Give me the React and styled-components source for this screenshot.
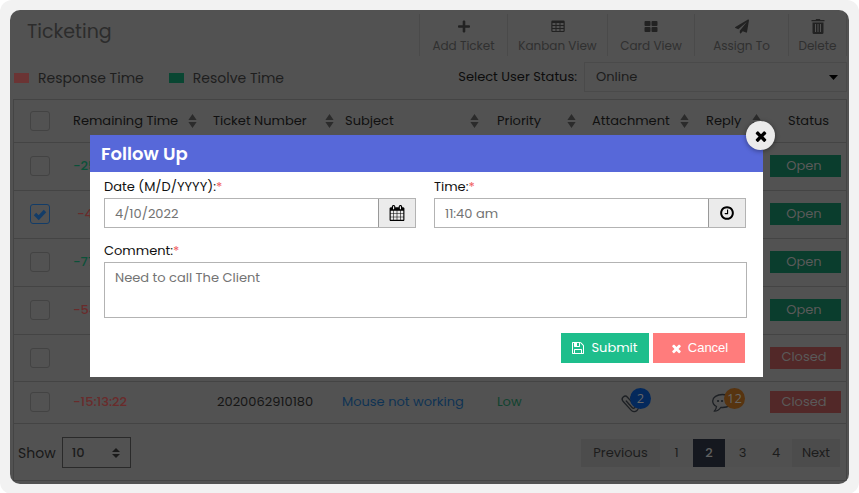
import React from "react";
import styled, { createGlobalStyle } from "styled-components";
import { FaPlus, FaPaperPlane } from "react-icons/fa";

const color = {
  frame: "#f2f2f2",
  panel: "#525252",
  line: "#444444",
  soft: "#4a4a4a",
  text: "#151515",
  muted: "#303030",
  green: "#0a3d2d",
  greenText: "#0b5139",
  red: "#522828",
  redText: "#6a2b2b",
  blue: "#0f3354",
};

const Global = createGlobalStyle`
  *, *::before, *::after { box-sizing: border-box; }
  body { margin: 0; background: #fff; }
  body, button, input, select, textarea {
    font-family: Poppins, Inter, sans-serif;
    font-size: 13px;
    line-height: 20px;
  }
  button, input, select, textarea { margin: 0; border-radius: 0; }
  button { cursor: pointer; }
`;

const Frame = styled.div`
  min-height: 100vh;
  display: flex;
  padding: 10px;
  background: ${color.frame};
  border-radius: 12px;
`;

const Panel = styled.div`
  position: relative;
  flex: 1;
  min-width: 0;
  padding: 4px 2px 3px 3px;
  background: ${color.panel};
  border-radius: 10px;
  overflow: hidden;
  color: ${color.text};
`;

const TopBar = styled.header`
  display: flex;
  justify-content: space-between;
  padding-left: 14px;
`;

const Title = styled.h1`
  margin: 5px 0 0;
  font-size: 19px;
  line-height: 26px;
  font-weight: 400;
  color: #2c2c2c;
`;

const Tools = styled.nav`
  display: flex;
  border-right: 1px solid ${color.soft};
`;

const Tool = styled.button`
  width: ${(p) => p.$width}px;
  height: 42px;
  padding: 5px 0 0;
  display: flex;
  flex-direction: column;
  align-items: center;
  gap: 3px;
  border: 0;
  border-left: 1px solid ${color.soft};
  background: none;
  color: ${color.muted};
  font-size: 12px;
  line-height: 18px;
  white-space: nowrap;
  svg { height: 15px; color: #222; }
`;

const Filters = styled.div`
  display: flex;
  align-items: center;
  padding: 6px 0 7px;
`;

const Legend = styled.div`
  display: flex;
  flex: 1;
  gap: 25px;
  padding: 2px 0 0 1px;
  font-size: 14px;
`;

const LegendItem = styled.span`
  display: flex;
  align-items: center;
  gap: 9px;
  color: #1e1e1e;
  &::before {
    content: "";
    width: 15px;
    height: 10px;
    background: ${(p) => p.$tone};
  }
`;

const StatusLabel = styled.label`
  margin-right: 7px;
  color: #0c0c0c;
`;

const SelectBox = styled.span`
  display: grid;
  align-items: center;
  width: ${(p) => p.$width}px;
  height: ${(p) => p.$height}px;
  > * { grid-area: 1 / 1; }
  svg {
    justify-self: end;
    margin-right: ${(p) => p.$inset}px;
    pointer-events: none;
  }
`;

const Select = styled.select`
  width: 100%;
  height: 100%;
  padding: 0 ${(p) => (p.$strong ? 9 : 11)}px;
  appearance: none;
  border: ${(p) => (p.$strong ? "1px solid #2a2a2a" : `1px solid ${color.soft}`)};
  background: none;
  color: #1c1c1c;
  font-weight: ${(p) => (p.$strong ? 500 : 400)};
`;

const Card = styled.section`
  border: 1px solid ${color.line};
`;

const Table = styled.table`
  width: 100%;
  table-layout: fixed;
  border-collapse: collapse;
`;

const Row = styled.tr`
  height: ${(p) => p.$height}px;
  border-bottom: 1px solid ${color.line};
`;

const HeadCell = styled.th`
  padding: 0;
  font-weight: 400;
  text-align: left;
  white-space: nowrap;
  color: #101010;
`;

const HeadInner = styled.div`
  display: flex;
  align-items: center;
  justify-content: space-between;
  padding: 0 ${(p) => p.$pad || 0}px 0 ${(p) => p.$indent || 0}px;
  svg { flex: none; }
`;

const Cell = styled.td`
  padding: 0 0 0 ${(p) => p.$indent || 0}px;
  white-space: nowrap;
  vertical-align: middle;
`;

const Check = styled.input`
  display: block;
  width: 20px;
  height: 20px;
  margin: 0 0 0 16px;
  appearance: none;
  border: 1px solid #434343;
  border-radius: 3px;
  &:checked {
    border-color: #123c68;
    background: center / 14px no-repeat
      url("data:image/svg+xml,%3Csvg xmlns='http://www.w3.org/2000/svg' viewBox='0 0 14 14'%3E%3Cpath d='M2 7l3.7 3.7L12 4' fill='none' stroke='%23123c68' stroke-width='3.4'/%3E%3C/svg%3E");
  }
`;

const Remaining = styled.span`
  font-weight: 500;
  color: ${(p) => (p.$late ? color.redText : color.greenText)};
`;

const Subject = styled.a`
  color: ${color.blue};
  text-decoration: none;
`;

const Priority = styled.span`
  color: #10432f;
`;

const Status = styled.button`
  display: block;
  width: 71px;
  height: 22px;
  padding: 0 3px 1px 0;
  border: 0;
  background: ${(p) => (p.$closed ? color.red : color.green)};
  color: #5a5a5a;
`;

const IconCount = styled.span`
  position: relative;
  display: block;
  width: 40px;
  height: 30px;
  margin-left: ${(p) => p.$indent}px;
`;

const Badge = styled.span`
  position: absolute;
  top: 1px;
  right: ${(p) => p.$right}px;
  width: 21px;
  height: 21px;
  border-radius: 50%;
  background: ${(p) => p.$tone};
  color: #666;
  font-family: "Open Sans", sans-serif;
  text-align: center;
  line-height: 21px;
`;

const Footer = styled.footer`
  display: flex;
  align-items: center;
  height: 56px;
  padding: 2px 6px 0 4px;
`;

const ShowLabel = styled.label`
  margin-right: 6px;
  font-size: 14px;
  color: #181818;
`;

const Pager = styled.nav`
  display: flex;
  margin-left: auto;
`;

const PageButton = styled.button`
  width: ${(p) => p.$width}px;
  height: 28px;
  padding: 0;
  border: 0;
  background: ${(p) => (p.$active ? "#15181f" : p.$edge ? "#4c4c4c" : "#505050")};
  color: ${(p) => (p.$active ? "#606060" : "#1c1c1c")};
  font-weight: ${(p) => (p.$active ? 500 : 400)};
`;

const Backdrop = styled.div`
  position: absolute;
  inset: 0;
  padding: 125px 86px 0 80px;
`;

const Dialog = styled.form`
  position: relative;
  background: #fff;
  color: #111;
`;

const DialogTitle = styled.h2`
  margin: 0;
  padding: 0 11px;
  background: #5768d9;
  color: #fff;
  font-size: 18px;
  line-height: 37px;
  font-weight: 600;
`;

const CloseButton = styled.button`
  position: absolute;
  top: -14px;
  right: -12px;
  width: 29px;
  height: 29px;
  padding: 0;
  display: grid;
  place-items: center;
  border: 0;
  border-radius: 50%;
  background: #ebebeb;
  color: #000;
  box-shadow: 0 1px 5px rgba(0, 0, 0, 0.4);
`;

const DialogBody = styled.div`
  padding: 5px 16px 14px 14px;
`;

const Fields = styled.div`
  display: grid;
  grid-template-columns: 1fr 1fr;
  gap: 18px;
  margin-bottom: 13px;
  padding-right: 1px;
`;

const Label = styled.label`
  display: block;
  margin-bottom: 1px;
`;

const Star = styled.span`
  color: #f0605f;
`;

const InputGroup = styled.div`
  display: flex;
  height: 30px;
  border: 1px solid #b3b3b3;
`;

const Input = styled.input`
  flex: 1;
  min-width: 0;
  padding: 2px 10px 0;
  border: 0;
  background: none;
  color: #737373;
`;

const AddOn = styled.button`
  width: 37px;
  padding: 0;
  display: grid;
  place-items: center;
  border: 0;
  border-left: 1px solid #999;
  background: #ebebeb;
  color: #000;
`;

const Comment = styled.textarea`
  display: block;
  width: 100%;
  height: 56px;
  padding: 5px 10px;
  border: 1px solid #b3b3b3;
  resize: none;
  color: #737373;
`;

const Actions = styled.div`
  display: flex;
  justify-content: flex-end;
  gap: 4px;
  padding: 15px 2px 0 0;
`;

const Action = styled.button`
  display: flex;
  align-items: center;
  justify-content: center;
  gap: ${(p) => (p.$cancel ? 5 : 7)}px;
  width: ${(p) => (p.$cancel ? 92 : 88)}px;
  height: 30px;
  padding: 0;
  border: 0;
  background: ${(p) => (p.$cancel ? "#ff7c7c" : "#1ebe8c")};
  color: #fff;
  ${(p) => p.$cancel && 'font-family: "Liberation Sans", sans-serif;'}
`;

const SortIcon = () => (
  <svg width="9" height="14" viewBox="0 0 9 14" fill="#2b2b2b" aria-hidden="true">
    <path d="M4.5 0L8.6 6H.4zM4.5 14L.4 8h8.2z" />
  </svg>
);

const GridIcon = () => (
  <svg width="14" height="15" viewBox="0 0 14 15" aria-hidden="true">
    <path
      fill="currentColor"
      fillRule="evenodd"
      d="M1.5 1.500h11A1.200 1.200 0 0 1 13.700 2.700v9.100a1.200 1.200 0 0 1-1.200 1.200h-11A1.200 1.200 0 0 1 .3 11.800V2.700A1.200 1.200 0 0 1 1.500 1.500zM1.500 4v2h3V4zM5.500 4v2h3V4zM9.500 4v2h3V4zM1.500 7v2h3V7zM5.500 7v2h3V7zM9.500 7v2h3V7zM1.500 10v2h3v-2zM5.500 10v2h3v-2zM9.500 10v2h3v-2z"
    />
  </svg>
);

const TilesIcon = () => (
  <svg width="14" height="15" viewBox="0 0 14 15" fill="currentColor" aria-hidden="true">
    <rect x="0.5" y="2" width="6" height="5" rx="1" />
    <rect x="7.5" y="2" width="6" height="5" rx="1" />
    <rect x="0.5" y="8" width="6" height="5" rx="1" />
    <rect x="7.5" y="8" width="6" height="5" rx="1" />
  </svg>
);

const TrashIcon = () => (
  <svg width="14" height="15" viewBox="0 0 14 15" aria-hidden="true">
    <path
      fill="currentColor"
      fillRule="evenodd"
      d="M.5 1h4l.7-1h3.600l.7 1h4v1.300H.5zM1.500 3.500h11V13.500a1.500 1.500 0 0 1-1.500 1.500H3a1.500 1.500 0 0 1-1.500-1.500zM4 5v8h1V5zM6.500 5v8h1V5zM9 5v8h1V5z"
    />
  </svg>
);

const Glyph = ({ size, d, box = "0 0 1792 1792" }) => (
  <svg width={size} height={size} viewBox={box} fill="currentColor" aria-hidden="true">
    <path d={d} />
  </svg>
);

const crossPath =
  "M1490 1322q0 40-28 68l-136 136q-28 28-68 28t-68-28l-294-294-294 294q-28 28-68 28t-68-28l-136-136q-28-28-28-68t28-68l294-294-294-294q-28-28-28-68t28-68l136-136q28-28 68-28t68 28l294 294 294-294q28-28 68-28t68 28l136 136q28 28 28 68t-28 68l-294 294 294 294q28 28 28 68z";
const clockPath =
  "M1024 544v448q0 14-9 23t-23 9h-320q-14 0-23-9t-9-23v-64q0-14 9-23t23-9h224v-352q0-14 9-23t23-9h64q14 0 23 9t9 23zm416 352q0-148-73-273t-198-198-273-73-273 73-198 198-73 273 73 273 198 198 273 73 273-73 198-198 73-273zm224 0q0 209-103 385.5t-279.5 279.5-385.5 103-385.5-103-279.5-279.5-103-385.5 103-385.5 279.5-279.5 385.5-103 385.5 103 279.5 279.5 103 385.5z";
const calendarPath =
  "M192 1664h288v-288h-288v288zm352 0h320v-288h-320v288zm-352-352h288v-320h-288v320zm352 0h320v-320h-320v320zm-352-384h288v-288h-288v288zm736 736h320v-288h-320v288zm-384-736h320v-288h-320v288zm768 736h288v-288h-288v288zm-384-352h320v-320h-320v320zm-352-864v-288q0-13-9.5-22.5t-22.5-9.5h-64q-13 0-22.5 9.5t-9.5 22.5v288q0 13 9.5 22.5t22.5 9.5h64q13 0 22.5-9.5t9.5-22.5zm736 864h288v-320h-288v320zm-384-384h320v-288h-320v288zm384 0h288v-288h-288v288zm32-480v-288q0-13-9.5-22.5t-22.5-9.5h-64q-13 0-22.5 9.5t-9.5 22.5v288q0 13 9.5 22.5t22.5 9.5h64q13 0 22.5-9.5t9.5-22.5zm384-64v1280q0 52-38 90t-90 38h-1408q-52 0-90-38t-38-90v-1280q0-52 38-90t90-38h128v-96q0-66 47-113t113-47h64q66 0 113 47t47 113v96h384v-96q0-66 47-113t113-47h64q66 0 113 47t47 113v96h128q52 0 90 38t38 90z";
const savePath =
  "M384 1536h768v-384h-768v384zm896 0h128v-896q0-14-10-38.5t-20-34.5l-281-281q-10-10-34-20t-39-10v416q0 40-28 68t-68 28h-576q-40 0-68-28t-28-68v-416h-128v1280h128v-416q0-40 28-68t68-28h832q40 0 68 28t28 68v416zm-384-928v-320q0-13-9.5-22.5t-22.5-9.5h-192q-13 0-22.5 9.5t-9.5 22.5v320q0 13 9.5 22.5t22.5 9.5h192q13 0 22.5-9.5t9.5-22.5zm640 32v928q0 40-28 68t-68 28h-1344q-40 0-68-28t-28-68v-1344q0-40 28-68t68-28h928q40 0 88 20t76 48l280 280q28 28 48 76t20 88z";

const ClipIcon = () => (
  <svg width="40" height="30" viewBox="0 0 40 30" fill="none" stroke="#1d2024" strokeWidth="1.3" strokeLinecap="round" aria-hidden="true">
    <path
      transform="translate(10 16) rotate(-42)"
      d="M-1.5-4V5a1.75 1.75 0 0 0 3.5 0V-6a3 3 0 0 0-6 0V6a4.2 4.2 0 0 0 8.4 0V-4"
    />
  </svg>
);

const ChatIcon = () => (
  <svg width="40" height="30" viewBox="0 0 40 30" fill="none" stroke="#1d2024" strokeWidth="1.3" strokeLinejoin="round" aria-hidden="true">
    <path d="M11.5 7.500C6 7.500 1.700 10.300 1.700 14c0 2.400 1.500 4.300 3.800 5.500-.2 2-1 3.500-2.300 4.700 3 0 5-1.300 6.500-3.700h2c5.500 0 9.300-2.900 9.300-6.500S17 7.500 11.500 7.500z" />
    <path d="M7 14h.1M11 14h.1M15 14h.1" strokeWidth="2.2" strokeLinecap="round" />
  </svg>
);

const tools = [
  { label: "Add Ticket", width: 88, icon: <FaPlus size={12} /> },
  { label: "Kanban View", width: 100, icon: <GridIcon /> },
  { label: "Card View", width: 87, icon: <TilesIcon /> },
  { label: "Assign To", width: 94, icon: <FaPaperPlane size={14} /> },
  { label: "Delete", width: 58, icon: <TrashIcon /> },
];

const columns = [
  { label: "Remaining Time", width: 140, pad: 16 },
  { label: "Ticket Number", width: 129, pad: 8 },
  { label: "Subject", width: 155, pad: 18, indent: 3 },
  { label: "Priority", width: 95, pad: 16 },
  { label: "Attachment", width: 114, pad: 17 },
  { label: "Reply", width: 64, pad: 9 },
];

const rows = [
  { height: 48, remaining: "-25" },
  { height: 48, remaining: "-4", late: true, checked: true, indent: 4 },
  { height: 48, remaining: "-77" },
  { height: 48, remaining: "-54", late: true },
  { height: 47, remaining: "", closed: true },
  {
    height: 42,
    remaining: "-15:13:22",
    late: true,
    closed: true,
    ticket: "2020062910180",
    subject: "Mouse not working",
    priority: "Low",
    attachments: 2,
    replies: 12,
  },
];

export default function App() {
  return (
    <Frame>
      <Global />
      <Panel>
        <TopBar>
          <Title>Ticketing</Title>
          <Tools>
            {tools.map((t) => (
              <Tool key={t.label} type="button" $width={t.width}>
                {t.icon}
                {t.label}
              </Tool>
            ))}
          </Tools>
        </TopBar>
        <Filters>
          <Legend>
            <LegendItem $tone="#6b3434">Response Time</LegendItem>
            <LegendItem $tone="#094632">Resolve Time</LegendItem>
          </Legend>
          <StatusLabel htmlFor="user-status">Select User Status:</StatusLabel>
          <SelectBox $width={263} $height={30} $inset={9}>
            <Select id="user-status" defaultValue="Online">
              <option>Online</option>
            </Select>
            <svg width="9" height="5" viewBox="0 0 9 5" fill="#000" aria-hidden="true">
              <path d="M0 0h9L4.5 5z" />
            </svg>
          </SelectBox>
        </Filters>
        <Card>
          <Table>
            <colgroup>
              <col width="59" />
              {columns.map((c) => (
                <col key={c.label} width={c.width} />
              ))}
              <col width="77" />
            </colgroup>
            <thead>
              <Row $height={42}>
                <HeadCell>
                  <Check type="checkbox" aria-label="Select all tickets" />
                </HeadCell>
                {columns.map((c) => (
                  <HeadCell key={c.label}>
                    <HeadInner $pad={c.pad} $indent={c.indent}>
                      {c.label}
                      <SortIcon />
                    </HeadInner>
                  </HeadCell>
                ))}
                <HeadCell>
                  <HeadInner $indent={18}>Status</HeadInner>
                </HeadCell>
              </Row>
            </thead>
            <tbody>
              {rows.map((r, i) => (
                <Row key={i} $height={r.height}>
                  <Cell>
                    <Check type="checkbox" defaultChecked={r.checked} aria-label={`Select ticket ${i + 1}`} />
                  </Cell>
                  <Cell $indent={r.indent}>
                    <Remaining $late={r.late}>{r.remaining}</Remaining>
                  </Cell>
                  <Cell $indent={4}>{r.ticket}</Cell>
                  <Cell>{r.subject && <Subject href="#ticket">{r.subject}</Subject>}</Cell>
                  <Cell>
                    <Priority>{r.priority}</Priority>
                  </Cell>
                  <Cell>
                    {r.attachments && (
                      <IconCount $indent={28}>
                        <ClipIcon />
                        <Badge $tone="#04295c" $right={9}>{r.attachments}</Badge>
                      </IconCount>
                    )}
                  </Cell>
                  <Cell>
                    {r.replies && (
                      <IconCount $indent={5}>
                        <ChatIcon />
                        <Badge $tone="#573410" $right={6}>{r.replies}</Badge>
                      </IconCount>
                    )}
                  </Cell>
                  <Cell>
                    <Status type="button" $closed={r.closed}>
                      {r.closed ? "Closed" : "Open"}
                    </Status>
                  </Cell>
                </Row>
              ))}
            </tbody>
          </Table>
          <Footer>
            <ShowLabel htmlFor="page-size">Show</ShowLabel>
            <SelectBox $width={69} $height={31} $inset={11}>
              <Select id="page-size" defaultValue="10" $strong>
                <option>10</option>
              </Select>
              <svg width="8" height="10" viewBox="0 0 8 10" fill="#1a1a1a" aria-hidden="true">
                <path d="M4 0l4 4H0zM4 10L0 6h8z" />
              </svg>
            </SelectBox>
            <Pager aria-label="Pages">
              <PageButton type="button" $width={79} $edge>Previous</PageButton>
              <PageButton type="button" $width={33}>1</PageButton>
              <PageButton type="button" $width={32} $active>2</PageButton>
              <PageButton type="button" $width={35}>3</PageButton>
              <PageButton type="button" $width={32}>4</PageButton>
              <PageButton type="button" $width={48} $edge>Next</PageButton>
            </Pager>
          </Footer>
        </Card>
        <Backdrop>
          <Dialog role="dialog" aria-labelledby="dialog-title" onSubmit={(e) => e.preventDefault()}>
            <DialogTitle id="dialog-title">Follow Up</DialogTitle>
            <CloseButton type="button" aria-label="Close">
              <Glyph size={16} d={crossPath} />
            </CloseButton>
            <DialogBody>
              <Fields>
                <div>
                  <Label htmlFor="date">Date (M/D/YYYY):<Star>*</Star></Label>
                  <InputGroup>
                    <Input id="date" defaultValue="4/10/2022" />
                    <AddOn type="button" aria-label="Pick a date">
                      <Glyph size={16} d={calendarPath} />
                    </AddOn>
                  </InputGroup>
                </div>
                <div>
                  <Label htmlFor="time">Time:<Star>*</Star></Label>
                  <InputGroup>
                    <Input id="time" defaultValue="11:40 am" />
                    <AddOn type="button" aria-label="Pick a time">
                      <Glyph size={16} d={clockPath} />
                    </AddOn>
                  </InputGroup>
                </div>
              </Fields>
              <Label htmlFor="comment">Comment:<Star>*</Star></Label>
              <Comment id="comment" defaultValue="Need to call The Client" />
              <Actions>
                <Action type="submit">
                  <Glyph size={12} d={savePath} box="0 128 1536 1536" />
                  Submit
                </Action>
                <Action type="button" $cancel>
                  <Glyph size={13} d={crossPath} />
                  Cancel
                </Action>
              </Actions>
            </DialogBody>
          </Dialog>
        </Backdrop>
      </Panel>
    </Frame>
  );
}
